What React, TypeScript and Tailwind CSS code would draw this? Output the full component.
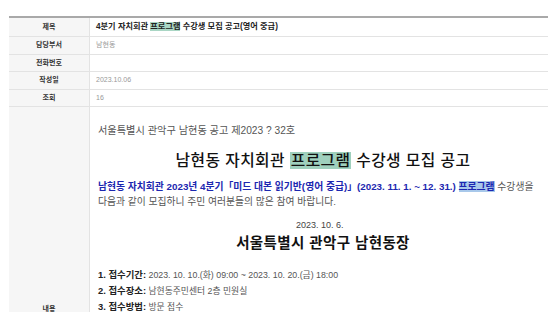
import React from 'react';

const FONT = { fontFamily: '"Liberation Sans", "Noto Sans CJK KR", sans-serif' };

const InfoRow: React.FC<{ label: string; children?: React.ReactNode; h: string }> = ({ label, children, h }) => (
  <div className={`flex border-b border-[#e3e3e3] ${h}`}>
    <div className="w-[81px] shrink-0 bg-[#f6f6f6] border-r border-[#e3e3e3] flex items-center justify-center text-[7px] font-bold text-[#333]">
      {label}
    </div>
    <div className="flex-1 flex items-center pl-[6px]">{children}</div>
  </div>
);

const items = [
  ['1. 접수기간:', ' 2023. 10. 10.(화) 09:00 ~ 2023. 10. 20.(금) 18:00'],
  ['2. 접수장소:', ' 남현동주민센터 2층 민원실'],
  ['3. 접수방법:', ' 방문 접수'],
  ['4. 모집인원:', ' 15명 내외(선착순)'],
  ['5. 수 강 료:', ' 월 20,000원'],
  ['6. 운영기간:', ' 2023. 11. 1. ~ 12. 31.'],
  ['7. 운영시간:', ' 매주 화요일 19:00 ~ 21:00'],
  ['8. 문 의 처:', ' 남현동주민센터'],
];

export default function App() {
  return (
    <div className="w-[560px] h-[312px] overflow-hidden bg-white" style={FONT}>
      <div className="ml-[9px] w-[539px] mt-[16px] border-t-2 border-[#a9a9a9]">
        <InfoRow label="제목" h="h-[19px]">
          <span className="text-[8.2px] font-bold text-[#222]">
            4분기 자치회관 <span className="bg-[#a9d6c4]">프로그램</span> 수강생 모집 공고(영어 중급)
          </span>
        </InfoRow>
        <InfoRow label="담당부서" h="h-[18px]">
          <span className="text-[7px] text-[#999]">남현동</span>
        </InfoRow>
        <InfoRow label="전화번호" h="h-[17px]" />
        <InfoRow label="작성일" h="h-[18px]">
          <span className="text-[7px] text-[#999]">2023.10.06</span>
        </InfoRow>
        <InfoRow label="조회" h="h-[17px]">
          <span className="text-[7px] text-[#999]">16</span>
        </InfoRow>
        <div className="flex">
          <div className="w-[81px] shrink-0 bg-[#f6f6f6] border-r border-[#e3e3e3] flex items-center justify-center text-[7px] font-bold text-[#333]">
            내용
          </div>
          <div className="flex-1 pl-[8px] pt-[18px] pb-[116px] text-[#555]">
            <p className="text-[10.2px] leading-[12px]">서울특별시 관악구 남현동 공고 제2023 ? 32호</p>
            <h1 className="mt-[14px] text-center text-[15.8px] leading-[20px] tracking-[0.4px] font-medium text-[#111]">
              남현동 자치회관 <span className="bg-[#9fd0bd] px-[1px]">프로그램</span> 수강생 모집 공고
            </h1>
            <p className="mt-[8px] text-[9.8px] leading-[15px]">
              <span className="font-bold text-[#1c27b0]">
                남현동 자치회관 2023년 4분기「미드 대본 읽기반(영어 중급)」(2023. 11. 1. ~ 12. 31.){' '}
                <span className="bg-[#a8c8ea]">프로그램</span>
              </span>{' '}
              수강생을
              <br />
              다음과 같이 모집하니 주민 여러분들의 많은 참여 바랍니다.
            </p>
            <p className="mt-[10px] pl-[198px] text-[9px] leading-[12px] text-[#444]">2023. 10. 6.</p>
            <p className="mt-[2px] text-center text-[14.5px] leading-[20px] tracking-[0.4px] font-bold text-[#111]">
              서울특별시 관악구 남현동장
            </p>
            <ul className="mt-[14px] text-[8.8px] leading-[15px] text-[#555]">
              {items.map(([k, v]) => (
                <li key={k}>
                  <span className="font-bold text-[#222] text-[9.4px]">{k}</span>
                  {v}
                </li>
              ))}
            </ul>
          </div>
        </div>
      </div>
    </div>
  );
}
